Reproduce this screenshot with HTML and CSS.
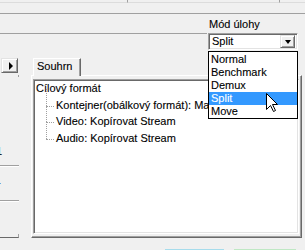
FILE: index.html
```html
<!DOCTYPE html>
<html>
<head>
<meta charset="utf-8">
<link rel="stylesheet" href="styles.css">
</head>
<body>
<div class="top">
  <div class="seg seg1"></div>
  <div class="seg seg2"></div>
  <div class="seg seg3"></div>
</div>
<div class="header">
  <div class="hleft"></div>
  <div class="mode">
    <div class="mode-label">Mód úlohy</div>
    <div class="combo">
      <div class="combo-field">
        <span class="combo-text">Split</span>
        <span class="combo-btn"><span class="arrow-down"></span></span>
      </div>
      <ul class="list">
        <li class="item">Normal</li>
        <li class="item">Benchmark</li>
        <li class="item">Demux</li>
        <li class="item selected">Split</li>
        <li class="item">Move</li>
      </ul>
      <svg class="cursor" width="13" height="20" viewBox="0 0 13 20">
        <path d="M0.5 0.5 L0.5 16.5 L4.5 12.5 L7.5 18.5 L9.5 17.5 L6.5 11.5 L11.5 11.5 Z" fill="#fff" stroke="#000" stroke-width="1" stroke-linejoin="miter"/>
      </svg>
    </div>
  </div>
</div>
<div class="main">
  <div class="leftpane">
    <div class="scrollbtn"><span class="arrow-right"></span></div>
    <div class="lp-corner"></div>
    <div class="lp-text one">1</div>
    <div class="lp-sep sep1"></div>
    <div class="lp-text dash">-</div>
    <div class="lp-sep sep2"></div>
    <div class="lp-fill"></div>
    <div class="lp-bottom"></div>
  </div>
  <div class="tabs">
    <div class="tabstrip">
      <div class="tab">Souhrn</div>
    </div>
    <div class="panel">
      <div class="tree">
        <div class="row root">Cílový formát</div>
        <div class="children">
          <div class="row node">Kontejner(obálkový formát): Matroska</div>
          <div class="row node">Video: Kopírovat Stream</div>
          <div class="row node last">Audio: Kopírovat Stream</div>
        </div>
      </div>
    </div>
  </div>
</div>
<div class="footer">
  <div class="fbtn teal"></div>
  <div class="fbtn green"></div>
</div>
</body>
</html>
```

FILE: styles.css
```css
* { box-sizing: border-box; }
html, body { margin: 0; padding: 0; }
body {
  width: 305px;
  height: 250px;
  overflow: hidden;
  background: #f0f0f0;
  font-family: "Liberation Sans", Arial, sans-serif;
  font-size: 11px;
  color: #000;
  -webkit-text-stroke: 0.1px #000;
  display: flex;
  flex-direction: column;
}

/* top strip */
.top {
  height: 14px;
  display: flex;
  align-items: flex-start;
  border-bottom: 1px solid #a0a0a0;
}
.seg {
  height: 3px;
  border-bottom: 1px solid #dcdcdc;
}
.seg1 { width: 128px; border-right: 1px solid #a0a0a0; }
.seg2 { width: 152px; border-right: 1px solid #a0a0a0; }
.seg3 { flex: 1; }

/* header */
.header {
  height: 37px;
  display: flex;
}
.hleft {
  flex: 1;
  height: 20px;
  border-bottom: 1px solid #a0a0a0;
}
.mode {
  width: 98px;
  padding-left: 1px;
}
.mode-label {
  margin-top: 4px;
  height: 13px;
  line-height: 13px;
  padding-left: 1px;
}
.combo {
  position: relative;
  margin-top: 2px;
  width: 90px;
}
.combo-field {
  height: 17px;
  background: #fff;
  border: 1px solid;
  border-color: #a0a0a0 #fff #fff #a0a0a0;
  box-shadow: inset 1px 1px #696969, inset -1px -1px #e3e3e3;
  display: flex;
  align-items: center;
  padding: 2px 2px 2px 3px;
}
.combo-text { flex: 1; line-height: 13px; }
.combo-btn {
  width: 15px;
  height: 13px;
  background: #f0f0f0;
  border: 1px solid;
  border-color: #e3e3e3 #696969 #696969 #e3e3e3;
  box-shadow: inset 1px 1px #fff, inset -1px -1px #a0a0a0;
  display: flex;
  align-items: center;
  justify-content: center;
}
.arrow-down {
  width: 0; height: 0;
  border-left: 3.5px solid transparent;
  border-right: 3.5px solid transparent;
  border-top: 4px solid #000;
}
.list {
  position: absolute;
  left: 0;
  top: 18px;
  width: 90px;
  margin: 0;
  padding: 1px 0 0 0;
  list-style: none;
  background: #fff;
  border: 1px solid #000;
  z-index: 5;
}
.item {
  height: 13px;
  line-height: 13px;
  padding-left: 2px;
}
.item.selected { background: #3399ff; color: #fff; -webkit-text-stroke: 0.1px #fff; }
.cursor {
  position: absolute;
  left: 58px;
  top: 60px;
  z-index: 6;
}

/* main */
.main {
  height: 198px;
  display: flex;
}
.leftpane {
  width: 19px;
  display: flex;
  flex-direction: column;
}
.scrollbtn {
  margin-top: 7px;
  width: 17px;
  height: 15px;
  margin-left: 1px;
  background: #f0f0f0;
  border: 1px solid;
  border-color: #e3e3e3 #696969 #696969 #e3e3e3;
  box-shadow: inset 1px 1px #fff, inset -1px -1px #a0a0a0;
  display: flex;
  align-items: center;
  justify-content: center;
}
.arrow-right {
  width: 0; height: 0;
  border-top: 4px solid transparent;
  border-bottom: 4px solid transparent;
  border-left: 4px solid #000;
  margin-left: 2px;
}
.lp-corner {
  margin-top: 2px;
  height: 2px;
  width: 19px;
  border-right: 1px solid #a0a0a0;
}
.lp-text {
  height: 14px;
  line-height: 14px;
  margin-left: -4px;
}
.lp-text.one { margin-top: 67px; }
.lp-text.dash { margin-top: 8px; margin-left: -3px; }
.lp-sep {
  height: 2px;
  border-top: 1px solid #a0a0a0;
  border-bottom: 1px solid #fff;
}
.lp-sep.sep1 { margin-top: 7px; }
.lp-sep.sep2 { margin-top: 11px; }
.lp-fill { flex: 1; }
.lp-bottom {
  height: 4px;
  margin-bottom: 11px;
  border-bottom: 1px solid #696969;
  border-right: 1px solid #a0a0a0;
}

.tabs {
  margin-left: 12px;
  width: 271px;
  display: flex;
  flex-direction: column;
}
.tabstrip {
  height: 24px;
  display: flex;
  align-items: flex-end;
  padding-left: 2px;
}
.tab {
  height: 18px;
  margin-bottom: -1px;
  position: relative;
  z-index: 2;
  padding: 0 8px 0 3px;
  line-height: 15px;
  background: #f0f0f0;
  border-left: 1px solid #fff;
  border-top: 1px solid #fff;
  border-right: 1px solid #696969;
  box-shadow: inset -1px 0 #a0a0a0;
  border-top-left-radius: 1px;
}
.panel {
  height: 163px;
  border-left: 1px solid #fff;
  border-top: 1px solid #fff;
  border-right: 1px solid #696969;
  border-bottom: 1px solid #696969;
  box-shadow: inset -1px -1px #a0a0a0;
  padding: 3px 2px 3px 1px;
  display: flex;
}
.tree {
  flex: 1;
  background: #fff;
  border: 1px solid;
  border-color: #a0a0a0 #fff #fff #a0a0a0;
  box-shadow: inset 1px 1px #696969, inset -1px -1px #e3e3e3;
  padding: 1px 0 0 2px;
  overflow: hidden;
  white-space: nowrap;
}
.row {
  height: 16.5px;
  line-height: 15px;
}
.children { padding-left: 20px; }
.node { position: relative; }
.node::before {
  content: "";
  position: absolute;
  left: -10px;
  top: -9px;
  height: 17px;
  border-left: 1px dotted #a0a0a0;
}
.node::after {
  content: "";
  position: absolute;
  left: -10px;
  top: 8px;
  width: 8px;
  border-top: 1px dotted #a0a0a0;
}

.footer {
  height: 1px;
  display: flex;
}
.fbtn { height: 1px; }
.fbtn.teal { margin-left: 165px; width: 59px; background: #a6dcec; }
.fbtn.green { margin-left: 10px; width: 62px; background: #bfe8c4; }
```
